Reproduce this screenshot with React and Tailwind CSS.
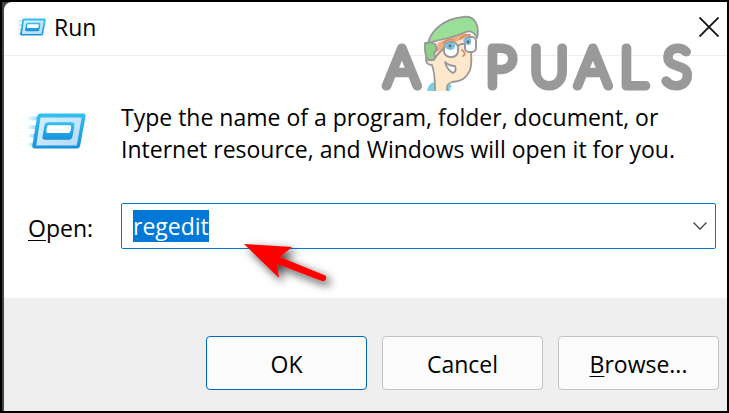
import { useEffect, useId, useRef } from "react";

function RunIcon({ className }) {
  const id = useId();
  return (
    <svg className={className} viewBox="0 0 60 38" aria-hidden="true">
      <defs>
        <linearGradient id={id + "frame"} x1="0" y1="0" x2="0" y2="1">
          <stop offset="0" stopColor="#34c0f0" />
          <stop offset="1" stopColor="#1692dc" />
        </linearGradient>
        <linearGradient id={id + "panel"} x1="0" y1="0" x2="1" y2="1">
          <stop offset="0" stopColor="#d8eefb" />
          <stop offset="1" stopColor="#b4dcf7" />
        </linearGradient>
        <linearGradient id={id + "speed"} x1="0" y1="0" x2="1" y2="0">
          <stop offset="0" stopColor="#8ad4f5" stopOpacity="0.1" />
          <stop offset="1" stopColor="#8ad4f5" />
        </linearGradient>
      </defs>
      <g fill={`url(#${id}speed)`}>
        <rect x="0" y="4" width="11" height="4" />
        <rect x="0" y="13" width="9" height="4" />
        <rect x="0" y="22" width="8" height="4" />
        <rect x="0" y="31" width="7" height="4" />
      </g>
      <path d="M13 1H57Q60 1 59.500 4L54 34Q53.400 37 50.500 37H7Q4 37 4.500 34L9.500 4Q10 1 13 1Z" fill={`url(#${id}frame)`} />
      <path d="M13 5H55.500L50.500 34H8.500Z" fill={`url(#${id}panel)`} />
      <path d="M21 10H45Q48.500 10 48 13.500L46 25Q45.400 28 42 28H18Q14.500 28 15 25L17 13.500Q17.600 10 21 10Z" fill={`url(#${id}frame)`} />
      <path d="M21.500 13H43Q45 13 44.700 15L44 19Q43.700 21 41.500 21H20.500Q18.700 21 19 19L19.600 15Q20 13 21.500 13Z" fill="#fff" />
    </svg>
  );
}

function AppualsLogo({ className }) {
  return (
    <svg className={className} viewBox="0 0 340 96" role="img" aria-label="Appuals">
      <g
        fill="#999"
        stroke="#999"
        strokeWidth="9"
        strokeLinejoin="round"
        fontFamily="Lato, sans-serif"
        fontWeight="100"
        fontSize="53"
      >
        <text x="7" y="71">A</text>
        <text x="108 152 198 242 285" y="71">PUALS</text>
      </g>
      <g stroke="#999" strokeWidth="1.800" strokeLinejoin="round" strokeLinecap="round">
        <path d="M49 76Q50 69 56 67L74 70Q72 73 72 76Z" fill="#79cfe8" stroke="none" />
        <path d="M48 42Q48 50 55 50L58 76H69Q68 69 74 67Q87 67 93 55Q96 47 93 27L88 17L60 27L48 34Z" fill="#fde8cb" stroke="none" />
        <path d="M48 42Q47 50 54 50Q57 58 57 75M69 75Q68 69 74 67Q87 67 92 55Q94 48 93 38" fill="none" />
        <path d="M60 28L87 17L90 23L82 25L62 35L58 38Z" fill="#f2ae86" stroke="none" />
        <path d="M47 28Q54 27 57 29Q61 34 56 38Q58 42 56 45L50 45Q46 38 47 28Z" fill="#8dd188" />
        <path d="M50 28C53 16 65 4 85 2C97 0 102 11 99 23C96 16 91 15 85 18C75 23 63 24 50 28Z" fill="#9adf98" />
        <path d="M57 43L61 38L67 32" fill="none" strokeWidth="2" />
        <rect x="66" y="27" width="14" height="15" rx="6" fill="#fff" strokeWidth="2" />
        <rect x="87" y="22" width="11" height="15" rx="4" fill="#fff" strokeWidth="2" />
        <path d="M80 31Q83 28 87 29" fill="none" strokeWidth="2" />
        <path d="M66 31Q71 25 77 29Q78 34 73 35Q69 35 66 31Z" fill="#79bfe0" stroke="none" />
        <path d="M85 25Q89 21 93 24Q94 29 91 30Q87 30 85 25Z" fill="#79bfe0" stroke="none" />
        <circle cx="72" cy="31" r="1.400" fill="#666" stroke="none" />
        <circle cx="90" cy="27" r="1.400" fill="#666" stroke="none" />
        <path d="M65 28Q70 23 76 25M82 24Q86 19 92 20" fill="none" stroke="#d98d62" />
        <path d="M84 35Q89 39 85 41" fill="none" stroke="#d98d62" />
        <path d="M67 47Q71 51 77 51Q79 56 75 58Q69 55 67 47Z" fill="#fff" />
      </g>
    </svg>
  );
}

function PointerArrow({ className }) {
  return (
    <svg className={className} viewBox="0 0 100 60" aria-hidden="true">
      <defs>
        <filter id="arrowShadow" x="-20%" y="-20%" width="150%" height="160%">
          <feDropShadow dx="4" dy="4" stdDeviation="5" floodColor="#000" floodOpacity="0.75" />
        </filter>
      </defs>
      <path
        d="M4 4L52 7L40 17L84 35A3 3 0 0 1 82 41L37 24L39 38Z"
        fill="#f00"
        filter="url(#arrowShadow)"
      />
    </svg>
  );
}

function DialogButton({ primary, children }) {
  return (
    <button
      type="button"
      className={
        "h-[54px] w-[161px] rounded border bg-[#fbfbfb] pt-0.5 " +
        (primary ? "border-[#0067b8]" : "border-[#c4c4c4]")
      }
    >
      {children}
    </button>
  );
}

export default function App() {
  const commandRef = useRef(null);

  useEffect(() => {
    commandRef.current.focus();
    commandRef.current.select();
  }, []);

  return (
    <div className="border-2 border-black bg-[#444] pl-0.5 font-['Open_Sans','Noto_Sans',sans-serif] text-[23px] leading-8 text-black">
      <main className="relative overflow-hidden rounded-tl-lg bg-white">
        <header className="flex h-[54px] items-center gap-2 border-b border-[#eee] pr-2 pb-1 pl-3.5">
          <RunIcon className="h-5 w-7 shrink-0" />
          <h1 className="flex-1">Run</h1>
          <button type="button" aria-label="Close" className="p-0">
            <svg className="size-5" viewBox="0 0 20 20" fill="none" stroke="#111" strokeWidth="1.800">
              <path d="M0.500 0.500L19.500 19.500M19.500 0.500L0.500 19.500" />
            </svg>
          </button>
        </header>

        <section className="grid grid-cols-[93px_1fr] items-center gap-y-[38px] pt-[45px] pr-[11px] pb-[49px] pl-6">
          <RunIcon className="mb-1 h-[38px] w-[58px]" />
          <p className="max-w-[570px]">
            Type the name of a program, folder, document, or Internet resource, and Windows will open it for you.
          </p>
          <label htmlFor="command" className="pt-1">
            <span className="underline decoration-1 underline-offset-3">O</span>pen:
          </label>
          <div className="relative flex h-[46px] items-center rounded-xs border border-[#0078d4] bg-white pr-2 pl-[11px]">
            <input
              id="command"
              ref={commandRef}
              type="text"
              defaultValue="regedit"
              autoComplete="off"
              spellCheck={false}
              className="min-w-0 flex-1 leading-8 outline-none selection:bg-[#0078d7] selection:text-white"
            />
            <button type="button" aria-label="Show recent commands">
              <svg className="h-2 w-3.5" viewBox="0 0 14 8" fill="none" stroke="#444" strokeWidth="1.300">
                <path d="M0.500 0.500L7 7L13.500 0.500" />
              </svg>
            </button>
            <PointerArrow className="pointer-events-none absolute top-[36px] left-[118px] h-[60px] w-[100px] overflow-visible" />
          </div>
        </section>

        <footer className="flex justify-end gap-[15px] bg-[#efefef] pt-[38px] pr-2 pb-[21px]">
          <DialogButton primary>OK</DialogButton>
          <DialogButton>Cancel</DialogButton>
          <DialogButton>
            <span className="underline decoration-1 underline-offset-3">B</span>rowse...
          </DialogButton>
        </footer>

        <AppualsLogo className="pointer-events-none absolute top-[13px] right-[9px] h-24 w-[340px]" />
      </main>
    </div>
  );
}
